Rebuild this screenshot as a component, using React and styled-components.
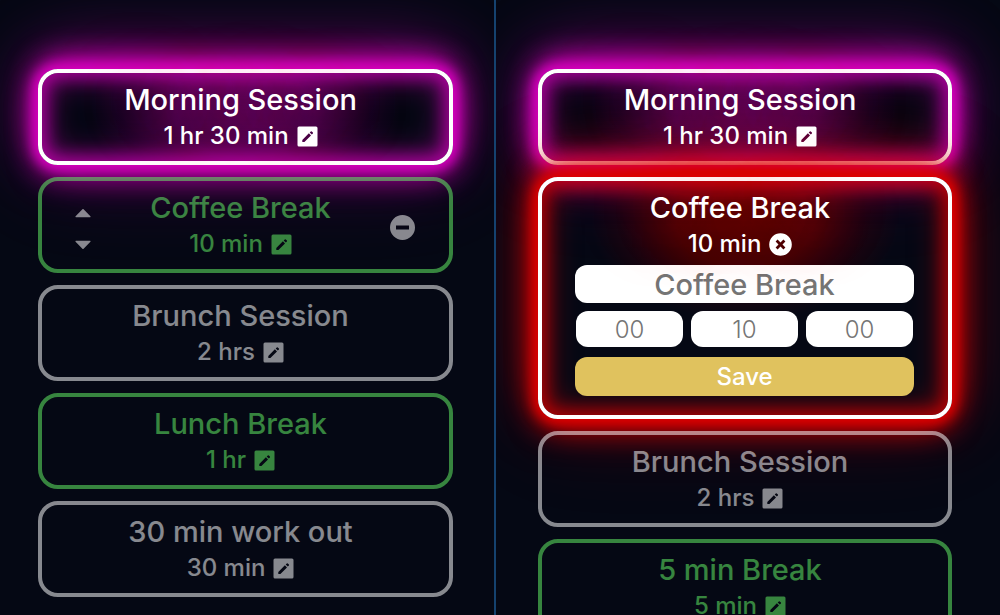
import React from 'react';
import styled, { createGlobalStyle, css } from 'styled-components';

const Global = createGlobalStyle`
  * { box-sizing: border-box; }
  html { scrollbar-width: none; background: #050814; }
  body { margin: 0; font-family: Inter, "Liberation Sans", sans-serif; }
`;

const tones = {
  idle: '#ffffff',
  rest: '#66f768',
};

const neon = {
  magenta: '214, 0, 190',
  red: '222, 0, 0',
};

const Page = styled.main`
  display: grid;
  grid-template-columns: 496fr 504fr;
  min-height: 100vh;
  background: #050814;
`;

const Pane = styled.section`
  display: flex;
  flex-direction: column;
  gap: 12px;
  height: 100vh;
  overflow: hidden;
  padding: 69px ${(p) => (p.$divided ? '41px 0 38px' : '48px 0 42px')};
  border-right: ${(p) => (p.$divided ? '2px solid #15426f' : 'none')};
`;

const glow = css`
  color: #fff;
  border-color: #fff;
  background: radial-gradient(
    ellipse 38% 100px at 50% 40px,
    rgba(${(p) => neon[p.$glow]}, 0.36),
    rgba(${(p) => neon[p.$glow]}, 0.3) 45%,
    rgba(${(p) => neon[p.$glow]}, 0.08) 80%,
    transparent
  );
  box-shadow:
    0 0 12px 5px rgb(${(p) => neon[p.$glow]}),
    0 0 30px 5px rgba(${(p) => neon[p.$glow]}, 0.7),
    0 -14px 32px -4px rgba(${(p) => neon[p.$glow]}, 0.75),
    0 14px 32px -4px rgba(${(p) => neon[p.$glow]}, 0.6),
    0 -14px 70px rgba(${(p) => neon[p.$glow]}, 0.4),
    0 0 90px 8px rgba(${(p) => neon[p.$glow]}, 0.2),
    inset 0 0 16px 5px rgba(${(p) => neon[p.$glow]}, 0.6),
    inset 0 0 32px 4px rgba(${(p) => neon[p.$glow]}, 0.55);
`;

const dimmed = css`
  color: ${(p) => tones[p.$tone]};
  border-color: currentColor;
  opacity: 0.52;
`;

const Card = styled.article`
  position: relative;
  flex: none;
  padding: 8px 0 7px;
  border: 4px solid;
  border-radius: 20px;
  text-align: center;
  ${(p) => (p.$glow ? glow : dimmed)}
`;

const Heading = styled.header`
  position: relative;
  z-index: 1;
  padding-right: 10px;
  pointer-events: none;
`;

const Title = styled.h2`
  margin: 0;
  font-size: 29px;
  line-height: 37px;
  font-weight: 500;
  text-shadow: ${(p) =>
    p.$glow
      ? `0 0 60px rgba(${neon[p.$glow]}, 0.6), 0 0 80px rgba(${neon[p.$glow]}, 0.6)`
      : 'none'};
`;

const Duration = styled.p`
  display: flex;
  align-items: center;
  justify-content: center;
  gap: 8px;
  margin: 0;
  font-size: 24px;
  line-height: 36px;
  font-weight: 500;
`;

const IconButton = styled.button`
  display: flex;
  padding: 0;
  border: 0;
  background: none;
  color: inherit;
  cursor: pointer;
  pointer-events: auto;
`;

const Reorder = styled.div`
  position: absolute;
  left: 33px;
  top: 27px;
  display: flex;
  flex-direction: column;
  gap: 22px;
  color: #fff;
`;

const Remove = styled.div`
  position: absolute;
  right: 34px;
  top: 34px;
  color: #fff;
`;

const EditForm = styled.form`
  display: flex;
  flex-direction: column;
  padding: 3px 34px 12px 33px;
`;

const Field = styled.input`
  width: 100%;
  min-width: 0;
  height: ${(p) => (p.$small ? 36 : 38)}px;
  padding: 0;
  border: 0;
  border-radius: 12px;
  background: #fff;
  font-family: inherit;
  font-size: ${(p) => (p.$small ? 24 : 29)}px;
  font-weight: ${(p) => (p.$small ? 300 : 500)};
  text-align: center;
  &::placeholder { color: #757575; opacity: 1; }
`;

const TimeRow = styled.div`
  display: grid;
  grid-template-columns: repeat(3, 1fr);
  gap: 8px;
  margin: 8px 1px 10px;
`;

const Save = styled.button`
  height: 39px;
  padding: 0;
  border: 0;
  border-radius: 12px;
  background: #e0c25e;
  color: #fff;
  font-family: inherit;
  font-size: 24px;
  font-weight: 500;
`;

const PencilIcon = () => (
  <svg width="21" height="21" viewBox="0 0 21 21" fill="currentColor" aria-hidden="true">
    <path
      fillRule="evenodd"
      d="M2 .5h17A1.500 1.500 0 0 1 20.500 2v17a1.500 1.500 0 0 1-1.500 1.500H2A1.500 1.500 0 0 1 .5 19V2A1.500 1.500 0 0 1 2 .5ZM5.300 13.900V16h2.100l6.600-6.600-2.100-2.100ZM12.700 6.500l2.100 2.100 1.100-1.100a.8.8 0 0 0 0-1L14.800 5.400a.8.8 0 0 0-1 0Z"
    />
  </svg>
);

const CloseIcon = () => (
  <svg width="23" height="23" viewBox="0 0 23 23" aria-hidden="true">
    <path
      fill="currentColor"
      fillRule="evenodd"
      d="M11.500 .2a11.300 11.300 0 1 1 0 22.600 11.300 11.300 0 0 1 0-22.600ZM6.600 8.600l2.900 2.900-2.900 2.900 2 2 2.900-2.900 2.900 2.900 2-2-2.900-2.900 2.900-2.900-2-2-2.900 2.900-2.900-2.900Z"
    />
  </svg>
);

const MinusIcon = () => (
  <svg width="25" height="25" viewBox="0 0 25 25" fill="currentColor" aria-hidden="true">
    <path fillRule="evenodd" d="M12.500 0a12.500 12.500 0 1 1 0 25 12.500 12.500 0 0 1 0-25ZM6 10.500v4h13v-4Z" />
  </svg>
);

const Arrow = ({ down }) => (
  <svg width="16" height="10" viewBox="0 0 16 10" fill="currentColor" aria-hidden="true">
    <path
      d={
        down
          ? 'M.8 .8h14.400q.8.300.2 1L8.600 8.800q-.6.500-1.200 0L.6 1.800q-.6-.7.2-1Z'
          : 'M.8 9.200h14.400q.8-.300.2-1L8.600 1.200q-.6-.5-1.200 0L.6 8.200q-.6.7.2 1Z'
      }
    />
  </svg>
);

const Session = ({ title, time, tone = 'idle', glow: glowColor, movable, editing }) => (
  <Card $tone={tone} $glow={glowColor}>
    <Heading>
      <Title $glow={glowColor}>{title}</Title>
      <Duration>
        {time}
        <IconButton type="button" aria-label={editing ? 'Close editor' : `Edit ${title}`}>
          {editing ? <CloseIcon /> : <PencilIcon />}
        </IconButton>
      </Duration>
    </Heading>
    {movable && (
      <>
        <Reorder>
          <IconButton type="button" aria-label="Move up"><Arrow /></IconButton>
          <IconButton type="button" aria-label="Move down"><Arrow down /></IconButton>
        </Reorder>
        <Remove>
          <IconButton type="button" aria-label="Remove"><MinusIcon /></IconButton>
        </Remove>
      </>
    )}
    {editing && (
      <EditForm>
        <Field aria-label="Name" placeholder={title} />
        <TimeRow>
          <Field $small aria-label="Hours" placeholder="00" />
          <Field $small aria-label="Minutes" placeholder="10" />
          <Field $small aria-label="Seconds" placeholder="00" />
        </TimeRow>
        <Save type="button">Save</Save>
      </EditForm>
    )}
  </Card>
);

export default function App() {
  return (
    <Page>
      <Global />
      <Pane $divided>
        <Session title="Morning Session" time="1 hr 30 min" glow="magenta" />
        <Session title="Coffee Break" time="10 min" tone="rest" movable />
        <Session title="Brunch Session" time="2 hrs" />
        <Session title="Lunch Break" time="1 hr" tone="rest" />
        <Session title="30 min work out" time="30 min" />
      </Pane>
      <Pane>
        <Session title="Morning Session" time="1 hr 30 min" glow="magenta" />
        <Session title="Coffee Break" time="10 min" glow="red" editing />
        <Session title="Brunch Session" time="2 hrs" />
        <Session title="5 min Break" time="5 min" tone="rest" />
      </Pane>
    </Page>
  );
}
